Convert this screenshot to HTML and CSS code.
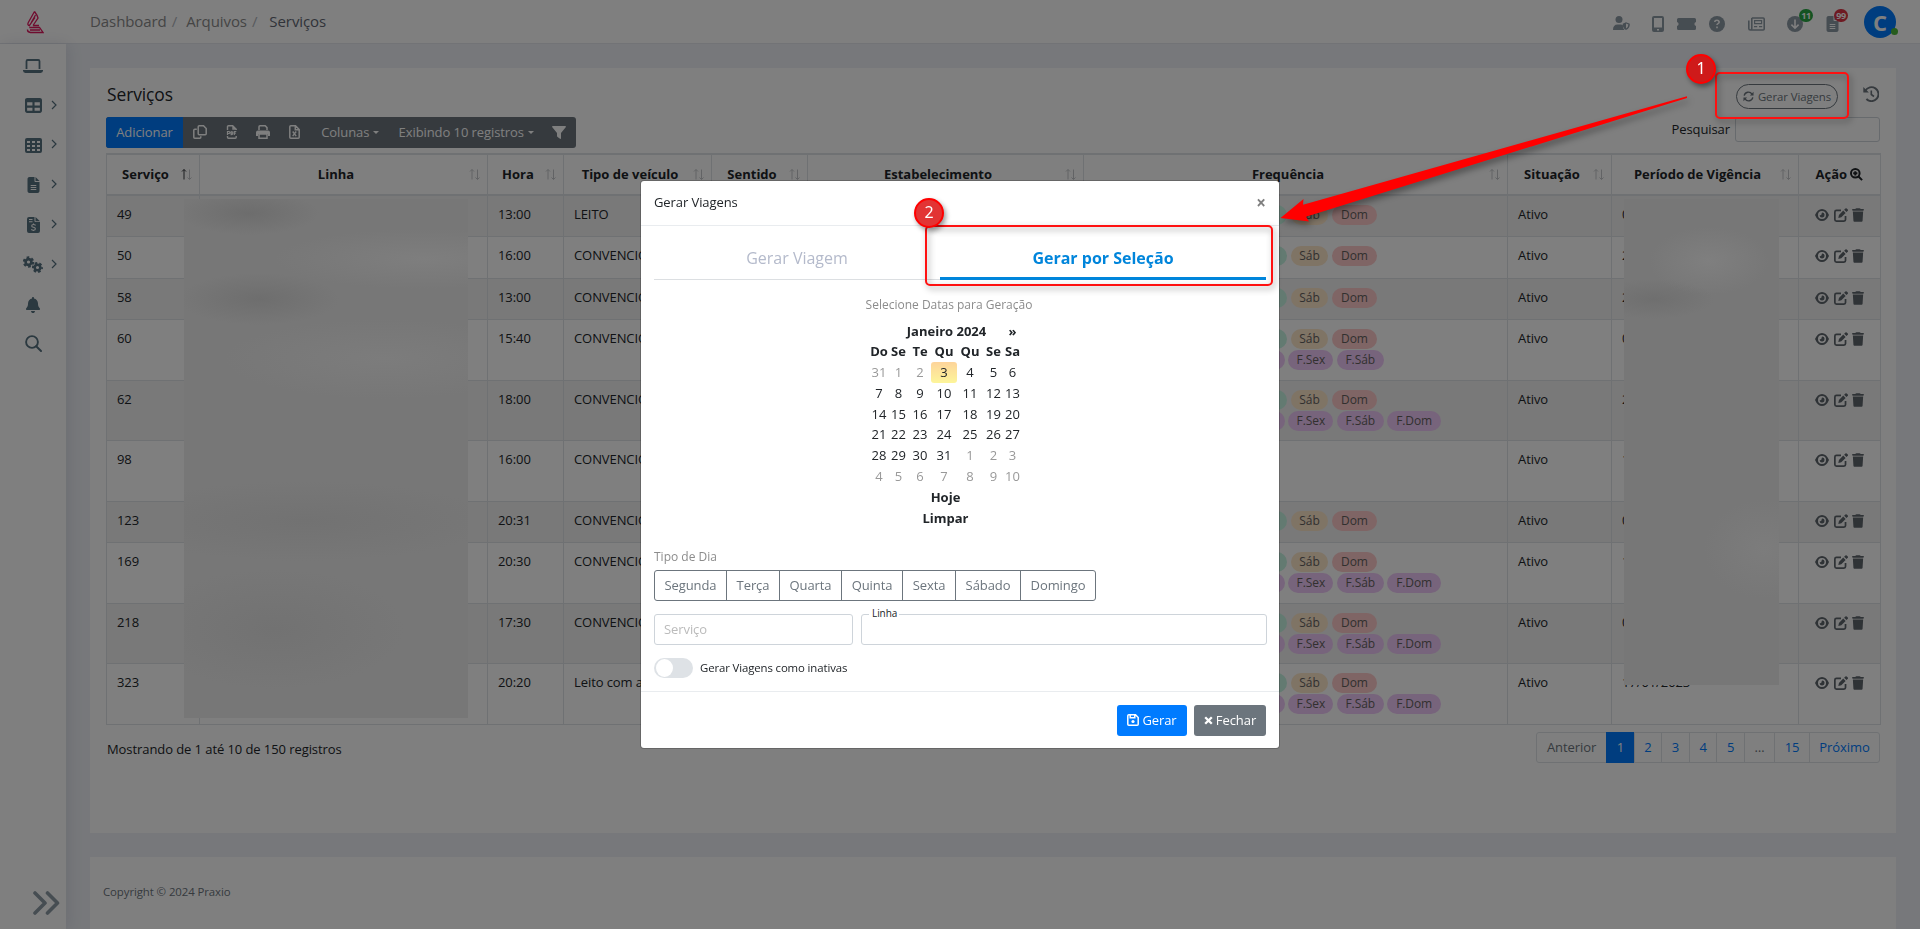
FILE: index.html
```html
<!DOCTYPE html>
<html lang="pt-br">
<head>
    <meta charset="UTF-8">
    <meta name="viewport" content="width=device-width, initial-scale=1.0">
    <title>Serviços</title>
    <link rel="stylesheet" href="styles.css">
</head>
<body>
    <!-- icon sprite -->
    <svg class="sprite" width="0" height="0">
        <symbol id="i-laptop" viewBox="0 0 20 14"><path d="M3.500 10V2.200Q3.500 1 4.700 1h10.600q1.200 0 1.200 1.200V10" fill="none" stroke="currentColor" stroke-width="1.800"/><path d="M0 11h20v.6Q20 14 17.600 14H2.400Q0 14 0 11.600z"/></symbol>
        <symbol id="i-table" viewBox="0 32 512 448"><path d="M64 256V160H224v96H64zm0 64H224v96H64V320zm224 96V320H448v96H288zM448 256H288V160H448v96zM64 32C28.700 32 0 60.700 0 96V416c0 35.300 28.700 64 64 64H448c35.300 0 64-28.700 64-64V96c0-35.300-28.700-64-64-64H64z"/></symbol>
        <symbol id="i-grid" viewBox="0 0 17 15"><path fill-rule="evenodd" d="M2 0h13q2 0 2 2v11q0 2-2 2H2q-2 0-2-2V2q0-2 2-2zM2 3h3v2H2zM7 3h3v2H7zM12 3h3v2h-3zM2 7h3v2H2zM7 7h3v2H7zM12 7h3v2h-3zM2 11h3v2H2zM7 11h3v2H7zM12 11h3v2h-3z"/></symbol>
        <symbol id="i-file" viewBox="0 0 384 512"><path d="M64 0C28.700 0 0 28.700 0 64V448c0 35.300 28.700 64 64 64H320c35.300 0 64-28.700 64-64V160H256c-17.700 0-32-14.300-32-32V0H64zM256 0V128H384L256 0zM112 256H272c8.800 0 16 7.200 16 16s-7.200 16-16 16H112c-8.800 0-16-7.200-16-16s7.200-16 16-16zm0 64H272c8.800 0 16 7.200 16 16s-7.200 16-16 16H112c-8.800 0-16-7.200-16-16s7.200-16 16-16zm0 64H272c8.800 0 16 7.200 16 16s-7.200 16-16 16H112c-8.800 0-16-7.200-16-16s7.200-16 16-16z"/></symbol>
        <symbol id="i-invoice" viewBox="0 0 13 16"><path fill-rule="evenodd" d="M2 0h5.500v4q0 1 1 1H13v9q0 2-2 2H2q-2 0-2-2V2q0-2 2-2zM8.500 0L13 4.200H8.500zM2 2v1h3.500V2zM2 4.200v1h3.500v-1z"/><path d="M8.600 8.300Q7.900 7.500 6.500 7.500 4.700 7.500 4.700 8.900q0 1 1.800 1.400 1.900.4 1.900 1.500 0 1.400-1.900 1.400-1.500 0-2.200-.8M6.500 6.600v1M6.500 13v1.100" fill="none" stroke="#fff" stroke-width="1.100"/></symbol>
        <symbol id="i-cogs" viewBox="0 0 20 17"><g fill="none" stroke="currentColor"><circle cx="5.500" cy="6" r="2.900" stroke-width="2.600"/><circle cx="5.500" cy="6" r="4.600" stroke-width="2.200" stroke-dasharray="2.600 2.217"/><circle cx="14.500" cy="11.500" r="2.800" stroke-width="2.500"/><circle cx="14.500" cy="11.500" r="4.400" stroke-width="2.200" stroke-dasharray="2.500 2.108" stroke-dashoffset="1"/></g></symbol>
        <symbol id="i-bell" viewBox="0 0 448 512"><path d="M224 0c-17.700 0-32 14.300-32 32V51.200C119 66 64 130.600 64 208v18.800c0 47-17.300 92.400-48.500 127.600l-7.400 8.300c-8.400 9.400-10.400 22.900-5.300 34.400S19.400 416 32 416H416c12.600 0 24-7.400 29.200-18.900s3.100-25-5.300-34.400l-7.400-8.300C401.300 319.200 384 273.900 384 226.800V208c0-77.400-55-142-128-156.800V32c0-17.700-14.300-32-32-32zm45.300 493.300c12-12 18.700-28.300 18.700-45.300H224 160c0 17 6.700 33.300 18.700 45.300s28.300 18.700 45.300 18.700s33.300-6.700 45.300-18.700z"/></symbol>
        <symbol id="i-search" viewBox="0 0 17 17"><circle cx="7" cy="7" r="5.900" fill="none" stroke="currentColor" stroke-width="1.900"/><path d="M11.200 11.200L16 16" stroke="currentColor" stroke-width="2" stroke-linecap="round"/></symbol>
        <symbol id="i-right" viewBox="0 0 6 10"><path d="M1 1l4 4-4 4" fill="none" stroke="currentColor" stroke-width="1.200"/></symbol>
        <symbol id="i-double" viewBox="0 0 27 24"><path d="M2 2l10 10L2 22M14.500 2l10 10-10 10" fill="none" stroke="currentColor" stroke-width="3.600" stroke-linecap="round" stroke-linejoin="round"/></symbol>
        <symbol id="i-copy" viewBox="0 0 14 14"><g fill="none" stroke="currentColor" stroke-width="1.500"><path d="M6.200.8h4.300l2.700 2.700v5.200q0 1-1 1h-6q-1 0-1-1V1.800q0-1 1-1z"/><path d="M3.800 4.300h-2q-1 0-1 1v6.900q0 1 1 1h5q1 0 1-1v-1"/></g></symbol>
        <symbol id="i-pdf" viewBox="0 0 12 14"><path d="M1.500 5V1.800q0-1 1-1h4.200l3.500 3.500V5M7 1v3h3M1.500 11v1.200q0 1 1 1h6.700q1 0 1-1V11" fill="none" stroke="currentColor" stroke-width="1.400"/><path d="M1.500 10V6.500H3Q4 6.500 4 7.500T3 8.500H1.500M5.200 6.500v3.200q1.600 0 1.600-1.600T5.200 6.500M8.300 10V6.500h2M8.300 8.200h1.500" fill="none" stroke="currentColor" stroke-width="1.200"/></symbol>
        <symbol id="i-print" viewBox="0 0 14 14"><path d="M3 5V1.800q0-1 1-1h5.200L11 2.600V5" fill="none" stroke="currentColor" stroke-width="1.500"/><path fill-rule="evenodd" d="M2 5.500h10q2 0 2 2V11h-2V9H2v2H0V7.500q0-2 2-2z"/><path d="M3 9h8v4.200H3z" fill="none" stroke="currentColor" stroke-width="1.500"/></symbol>
        <symbol id="i-excel" viewBox="0 0 11 14"><path d="M1.800.8h4.700L10.200 4.500v7.700q0 1-1 1H1.800q-1 0-1-1V1.800q0-1 1-1zM6.300 1v3.700h3.700" fill="none" stroke="currentColor" stroke-width="1.500"/><path d="M3.700 6.500l3.500 4.600M7.200 6.500l-3.500 4.600" stroke="currentColor" stroke-width="1.400"/></symbol>
        <symbol id="i-filter" viewBox="0 0 14 13"><path d="M.8 0h12.400q1.200.3.500 1.300L9 7v5.300q-.2.900-1 .4L5.300 10.700Q5 10.400 5 10V7L.3 1.300Q-.3.300.8 0z"/></symbol>
        <symbol id="i-user" viewBox="0 0 17 14"><circle cx="6" cy="3.500" r="3.500"/><path d="M0 14Q0 8.500 4.500 8.500H8q1 0 1.800.4Q9.500 12 11.500 14z"/><path fill-rule="evenodd" d="M13 6.200l3.800 1.500Q17 12 13 14 9.500 12 9.700 7.700zM13 7.600v4.800q2.400-1.300 2.400-3.800z"/></symbol>
        <symbol id="i-mobile" viewBox="0 0 12 16"><path fill-rule="evenodd" d="M2 0h8q2 0 2 2v12q0 2-2 2H2q-2 0-2-2V2q0-2 2-2zM2 2v9.500h8V2zM5 13v1.500h2V13z"/></symbol>
        <symbol id="i-ticket" viewBox="0 0 19 12"><path d="M1.500 0h16Q19 0 19 1.500V4q-1.600.5-1.600 2T19 8v2.500q0 1.500-1.500 1.500h-16Q0 12 0 10.500V8q1.600-.5 1.600-2T0 4V1.500Q0 0 1.500 0z"/></symbol>
        <symbol id="i-help" viewBox="0 0 16 16"><circle cx="8" cy="8" r="8"/><path d="M5.700 6q.2-1.700 2.200-1.700T10.200 6q0 1-1.200 1.600-1 .5-1 1.400M8 10.600v1.600" fill="none" stroke="#fff" stroke-width="1.600"/></symbol>
        <symbol id="i-news" viewBox="0 0 17 14"><path d="M3.800 1h11.400q1 0 1 1v10q0 1-1 1H2.300Q.8 13 .8 11.500V3.500M3.800 1v10.500Q3.800 13 2.300 13" fill="none" stroke="currentColor" stroke-width="1.600"/><path d="M6.600 3.700h7v3h-7zM6 9.600h3.200M11 9.600h3.200" fill="none" stroke="currentColor" stroke-width="1.200"/></symbol>
        <symbol id="i-down" viewBox="0 0 16 16"><circle cx="8" cy="8" r="8"/><path d="M8 3.500V12M4.400 8.600L8 12.200l3.600-3.600" fill="none" stroke="#fff" stroke-width="1.600"/></symbol>
        <symbol id="i-refresh" viewBox="0 0 12 12"><path d="M1.300 5A4.700 4.700 0 0 1 9.800 3.300M10.700 7A4.700 4.700 0 0 1 2.200 8.700" fill="none" stroke="currentColor" stroke-width="1.500"/><path d="M11.500.8v4h-4zM.5 11.200v-4h4z"/></symbol>
        <symbol id="i-history" viewBox="0 0 16 16"><path d="M2.300 4.800A7 7 0 1 1 3.400 13" fill="none" stroke="currentColor" stroke-width="1.900"/><path d="M.3 1v5.600h5.600z"/><path d="M8.300 4.500v4l2.700 2" fill="none" stroke="currentColor" stroke-width="1.600"/></symbol>
        <symbol id="i-zoom" viewBox="0 0 13 13"><circle cx="5.300" cy="5.300" r="4.300" fill="none" stroke="currentColor" stroke-width="2"/><path d="M8.500 8.500l3.600 3.600M3.200 5.300h4.200M5.300 3.200v4.200" stroke="currentColor" stroke-width="2"/></symbol>
        <symbol id="i-eye" viewBox="0 0 14 12"><path fill-rule="evenodd" d="M7 0q4.500 0 7 6-2.500 6-7 6T0 6Q2.500 0 7 0zM7 2a4 4 0 1 0 0 8 4 4 0 0 0 0-8z"/><path d="M7 3.500A2.500 2.500 0 1 1 4.600 6.200Q6.800 6.300 7 3.500z"/></symbol>
        <symbol id="i-edit" viewBox="0 0 13 13"><path d="M6.500 2.300H2.300q-1.500 0-1.500 1.500v6.900q0 1.500 1.500 1.500h6.900q1.500 0 1.500-1.500V7.500" fill="none" stroke="currentColor" stroke-width="1.600"/><path d="M4 9.200l.6-2.800 4-4 2.200 2.200-4 4zM9.400 1.600l1.200-1.200q.6-.5 1.200 0l1 1q.5.600 0 1.200l-1.200 1.200z"/></symbol>
        <symbol id="i-trash" viewBox="0 0 448 512"><path d="M135.200 17.700L128 32H32C14.300 32 0 46.300 0 64S14.300 96 32 96H416c17.700 0 32-14.300 32-32s-14.300-32-32-32H320l-7.200-14.300C307.400 6.800 296.300 0 284.200 0H163.800c-12.100 0-23.200 6.800-28.600 17.700zM416 128H32L53.200 467c1.600 25.300 22.600 45 47.900 45H346.900c25.300 0 46.300-19.700 47.900-45L416 128z"/></symbol>
        <symbol id="i-save" viewBox="0 0 12 12"><path d="M1.800.8h6.700l2.700 2.700v6.700q0 1-1 1H1.800q-1 0-1-1V1.800q0-1 1-1zM3.200 1v2.800h4.600V1" fill="none" stroke="currentColor" stroke-width="1.500"/><circle cx="6" cy="7.500" r="1.600"/></symbol>
        <symbol id="i-times" viewBox="0 0 9 9"><path d="M1.200 1.200l6.600 6.600M7.800 1.200L1.200 7.800" stroke="currentColor" stroke-width="2.300"/></symbol>
        <symbol id="i-sort" viewBox="0 0 11 12"><path d="M3 11V1M1 3l2-2 2 2" fill="none" stroke="currentColor"/><path class="down" d="M8.500 1v10M6.500 9l2 2 2-2" fill="none"/></symbol>
    </svg>

    <header class="topbar">
        <a class="logo" href="#">
            <svg width="18" height="24" viewBox="0 0 18 24" stroke="#e0195f" stroke-width="1.300"><path d="M8.500 1.500L2.300 12.500q-1.200 2.500 1 3.200L9 7.500M8.500 1.500q3 4 3.500 6.500L7 15.500M9.500 5L5 13M3.300 17.500h10.200l3.500 5H4.500q-3.300-.5-3-3M4 20h10M7 15.500h6"/></svg>
        </a>
        <nav class="breadcrumb">
            <a href="#">Dashboard</a><span class="sep">/</span>
            <a href="#">Arquivos</a><span class="sep">/</span>
            <span class="current">Serviços</span>
        </nav>
        <div class="top-icons">
            <svg class="t-user"><use href="#i-user"/></svg>
            <svg class="t-mobile"><use href="#i-mobile"/></svg>
            <svg class="t-ticket"><use href="#i-ticket"/></svg>
            <svg class="t-help"><use href="#i-help"/></svg>
            <svg class="t-news"><use href="#i-news"/></svg>
            <span class="notif"><svg class="t-down"><use href="#i-down"/></svg><span class="count green">11</span></span>
            <span class="notif"><svg class="t-file"><use href="#i-file"/></svg><span class="count red">99</span></span>
            <span class="avatar">C<span class="online"></span></span>
        </div>
    </header>

    <div class="layout">
        <aside class="sidebar">
            <a class="side-item"><svg width="20" height="14"><use href="#i-laptop"/></svg></a>
            <a class="side-item"><svg width="17" height="15"><use href="#i-table"/></svg><svg class="chev"><use href="#i-right"/></svg></a>
            <a class="side-item"><svg width="17" height="15"><use href="#i-grid"/></svg><svg class="chev"><use href="#i-right"/></svg></a>
            <a class="side-item"><svg width="13" height="16"><use href="#i-file"/></svg><svg class="chev"><use href="#i-right"/></svg></a>
            <a class="side-item"><svg width="13" height="16"><use href="#i-invoice"/></svg><svg class="chev"><use href="#i-right"/></svg></a>
            <a class="side-item"><svg width="20" height="17"><use href="#i-cogs"/></svg><svg class="chev"><use href="#i-right"/></svg></a>
            <a class="side-item"><svg width="14" height="16"><use href="#i-bell"/></svg></a>
            <a class="side-item last"><svg width="17" height="17"><use href="#i-search"/></svg></a>
            <a class="side-toggle"><svg width="27" height="24"><use href="#i-double"/></svg></a>
        </aside>

        <main class="main">
            <section class="card">
                <div class="card-head">
                    <h1>Serviços</h1>
                    <div class="card-actions">
                        <button class="btn-round"><svg width="11" height="11"><use href="#i-refresh"/></svg>Gerar Viagens</button>
                        <svg class="history" width="16" height="16"><use href="#i-history"/></svg>
                    </div>
                </div>
                <div class="tools">
                    <div class="toolbar">
                        <button class="add">Adicionar</button>
                        <button class="ico copy"><svg width="14" height="14"><use href="#i-copy"/></svg></button>
                        <button class="ico"><svg width="12" height="14"><use href="#i-pdf"/></svg></button>
                        <button class="ico"><svg width="14" height="14"><use href="#i-print"/></svg></button>
                        <button class="ico"><svg width="11" height="14"><use href="#i-excel"/></svg></button>
                        <button class="drop cols">Colunas</button>
                        <button class="drop show">Exibindo 10 registros</button>
                        <button class="filter"><svg width="14" height="13"><use href="#i-filter"/></svg></button>
                    </div>
                    <label class="search">Pesquisar <input type="text"></label>
                </div>

                <table class="grid">
                    <colgroup>
                        <col class="c-servico"><col class="c-linha"><col class="c-hora"><col class="c-tipo"><col class="c-sentido">
                        <col class="c-estab"><col class="c-freq"><col class="c-sit"><col class="c-periodo"><col class="c-acao">
                    </colgroup>
                    <thead>
                        <tr>
                            <th class="sorted">Serviço<svg class="sort"><use href="#i-sort"/></svg></th>
                            <th>Linha<svg class="sort"><use href="#i-sort"/></svg></th>
                            <th>Hora<svg class="sort"><use href="#i-sort"/></svg></th>
                            <th>Tipo de veículo<svg class="sort"><use href="#i-sort"/></svg></th>
                            <th>Sentido<svg class="sort"><use href="#i-sort"/></svg></th>
                            <th>Estabelecimento<svg class="sort"><use href="#i-sort"/></svg></th>
                            <th>Frequência<svg class="sort"><use href="#i-sort"/></svg></th>
                            <th>Situação<svg class="sort"><use href="#i-sort"/></svg></th>
                            <th>Período de Vigência<svg class="sort"><use href="#i-sort"/></svg></th>
                            <th class="last">Ação <svg width="13" height="13"><use href="#i-zoom"/></svg></th>
                        </tr>
                    </thead>
                    <tbody id="rows"></tbody>
                </table>

                <div class="table-foot">
                    <span class="info">Mostrando de 1 até 10 de 150 registros</span>
                    <ul class="pagination">
                        <li class="muted w-prev">Anterior</li>
                        <li class="active">1</li>
                        <li>2</li>
                        <li>3</li>
                        <li>4</li>
                        <li>5</li>
                        <li class="muted w-dots">…</li>
                        <li class="w-last">15</li>
                        <li class="w-next">Próximo</li>
                    </ul>
                </div>
            </section>
            <footer class="footer">Copyright © 2024 Praxio</footer>
        </main>
    </div>

    <div class="backdrop">
        <div class="hidden-area linha-area"></div>
        <div class="hidden-area periodo-area"></div>
        <div class="modal">
            <div class="modal-header">
                <span>Gerar Viagens</span>
                <span class="close">×</span>
            </div>
            <div class="modal-body">
                <div class="tabs">
                    <a class="tab">Gerar Viagem</a>
                    <a class="tab active">Gerar por Seleção</a>
                </div>
                <div class="dates">
                    <div class="label">Selecione Datas para Geração</div>
                    <div class="calendar">
                        <b class="month">Janeiro 2024</b><b class="next">»</b>
                        <b>Do</b><b>Se</b><b>Te</b><b>Qu</b><b>Qu</b><b>Se</b><b>Sa</b>
                        <i>31</i><i>1</i><i>2</i><span class="today">3</span><span>4</span><span>5</span><span>6</span>
                        <span>7</span><span>8</span><span>9</span><span>10</span><span>11</span><span>12</span><span>13</span>
                        <span>14</span><span>15</span><span>16</span><span>17</span><span>18</span><span>19</span><span>20</span>
                        <span>21</span><span>22</span><span>23</span><span>24</span><span>25</span><span>26</span><span>27</span>
                        <span>28</span><span>29</span><span>30</span><span>31</span><i>1</i><i>2</i><i>3</i>
                        <i>4</i><i>5</i><i>6</i><i>7</i><i>8</i><i>9</i><i>10</i>
                        <b class="full">Hoje</b>
                        <b class="full">Limpar</b>
                    </div>
                </div>
                <div class="label day-label">Tipo de Dia</div>
                <div class="days">
                    <button class="d1">Segunda</button><button class="d2">Terça</button><button class="d3">Quarta</button><button class="d4">Quinta</button><button class="d5">Sexta</button><button class="d6">Sábado</button><button class="d7">Domingo</button>
                </div>
                <div class="fields">
                    <input class="field servico" type="text" placeholder="Serviço">
                    <div class="field linha"><span>Linha</span></div>
                </div>
                <label class="switch"><span class="track"></span>Gerar Viagens como inativas</label>
            </div>
            <div class="modal-footer">
                <button class="btn primary"><svg width="12" height="12"><use href="#i-save"/></svg>Gerar</button>
                <button class="btn secondary"><svg width="9" height="9"><use href="#i-times"/></svg>Fechar</button>
            </div>
        </div>
    </div>

    <!-- tutorial marks -->
    <div class="marks">
        <div class="box box-1"></div>
        <div class="box box-2"></div>
        <svg class="arrow" width="1920" height="929"><path d="M1687 96.200L1303 204.800L1303.500 199L1280.500 218L1309 221.500L1306 216.800L1687 98z"/></svg>
        <div class="step step-1">1</div>
        <div class="step step-2">2</div>
    </div>

    <script src="script.js"></script>
</body>
</html>
```
FILE: styles.css
```css
* {
    box-sizing: border-box;
}

body {
    margin: 0;
    height: 929px;
    overflow: hidden;
    background-color: #eef1f6;
    color: #212529;
    font-family: "Open Sans", sans-serif;
    font-size: 13px;
    line-height: 1.5;
    letter-spacing: -.08px;
}

button, input {
    font-family: inherit;
    font-size: 13px;
    letter-spacing: inherit;
    margin: 0;
}

svg {
    fill: currentColor;
    display: block;
    flex: none;
}

.sprite {
    position: absolute;
}

/* top bar */
.topbar {
    display: flex;
    align-items: center;
    height: 44px;
    background-color: #fff;
    border-bottom: 1px solid #e4e7ed;
}

.logo {
    width: 66px;
    padding-left: 26px;
}

.logo svg {
    fill: none;
}

.breadcrumb {
    display: flex;
    padding-left: 24px;
    font-size: 15px;
    color: #8a8a8a;
}

.breadcrumb a {
    color: inherit;
    text-decoration: none;
}

.breadcrumb .sep {
    margin: 0 9px 0 5px;
    color: #b0b5bb;
}

.breadcrumb .current {
    margin-left: 3px;
    color: #626773;
}

.top-icons {
    display: flex;
    align-items: center;
    height: 43px;
    margin-left: auto;
    padding-right: 24px;
    color: #8d9aa5;
}

.t-user { width: 17px; height: 14px; margin-right: 22px; margin-top: 3px; }
.t-mobile { width: 12px; height: 16px; margin-right: 13px; margin-top: 4px; }
.t-ticket { width: 19px; height: 12px; margin-right: 13px; margin-top: 4px; }
.t-help { width: 16px; height: 16px; margin-right: 23px; margin-top: 4px; }
.t-news { width: 17px; height: 14px; margin-right: 22px; margin-top: 4px; }
.t-down { width: 16px; height: 16px; }
.t-file { width: 13px; height: 16px; }

.notif {
    position: relative;
    margin-top: 4px;
    margin-right: 23px;
}

.notif + .notif {
    margin-right: 25px;
}

.count {
    position: absolute;
    left: 12px;
    top: -7px;
    min-width: 14px;
    height: 13px;
    border-radius: 7px;
    color: #fff;
    font-size: 9px;
    font-weight: bold;
    letter-spacing: -.4px;
    line-height: 13px;
    text-align: center;
}

.notif + .notif .count {
    left: 8px;
}

.green { background-color: #28a745; }
.red { background-color: #dc3545; }

.avatar {
    position: relative;
    width: 32px;
    height: 32px;
    border-radius: 50%;
    background-color: #007bff;
    color: #fff;
    font-size: 22px;
    font-weight: bold;
    line-height: 32px;
    text-align: center;
}

.online {
    position: absolute;
    right: -2px;
    bottom: 3px;
    width: 7px;
    height: 7px;
    border-radius: 50%;
    background-color: #4fb83a;
}

/* layout */
.layout {
    display: flex;
    height: 885px;
}

.sidebar {
    display: flex;
    flex: none;
    flex-direction: column;
    width: 66px;
    padding-top: 2px;
    background-color: #fff;
    box-shadow: 2px 0 14px rgba(80, 80, 120, .14);
    color: #577280;
}

.side-item {
    display: grid;
    grid-template-columns: 34px 8px;
    align-items: center;
    justify-items: center;
    height: 39.800px;
    padding-left: 16px;
}

.side-item.last {
    height: 37px;
}

.side-item .chev {
    width: 6px;
    height: 10px;
    margin-left: -1px;
    margin-top: -2px;
}

.side-toggle {
    margin-top: auto;
    padding: 0 0 14px 33px;
    color: #8d9aa5;
}

.main {
    display: flex;
    flex-direction: column;
    flex: 1;
    min-width: 0;
    padding: 24px 24px 0;
}

.card {
    height: 765px;
    padding: 16px 16px 0;
    background-color: #fff;
}

.card-head {
    display: flex;
    justify-content: space-between;
    height: 33px;
}

.card-head h1 {
    margin: -3px 0 0 1px;
    font-size: 17.400px;
    font-weight: normal;
}

.card-actions {
    display: flex;
    align-items: flex-start;
}

.btn-round {
    display: flex;
    align-items: center;
    justify-content: center;
    gap: 4px;
    width: 102px;
    height: 25px;
    padding: 0 0 1px;
    border: 1px solid #6c757d;
    border-radius: 13px;
    background: none;
    color: #6c757d;
    font-size: 11.400px;
}

.history {
    margin: 2px 1px 0 25px;
    color: #6c757d;
}

.tools {
    display: flex;
    justify-content: space-between;
    height: 36px;
}

.toolbar {
    display: flex;
    height: 31px;
    border-radius: 3px;
    overflow: hidden;
    background-color: #6c757d;
}

.toolbar button {
    display: flex;
    align-items: center;
    justify-content: center;
    padding: 0 0 1px;
    border: 0;
    background: none;
    color: #fff;
}

.toolbar .add {
    width: 77px;
    background-color: #007bff;
}

.toolbar .ico {
    width: 31.700px;
}

.toolbar .copy {
    margin-left: 1px;
}

.toolbar .cols { width: 79px; }
.toolbar .show { width: 153px; }
.toolbar .filter { width: 33px; }

.drop::after {
    content: "";
    margin-left: 4px;
    border: 3px solid transparent;
    border-top-color: #fff;
    border-bottom: 0;
}

.search {
    display: flex;
    align-items: center;
    height: 25px;
}

.search input {
    width: 145px;
    height: 25px;
    margin-left: 5px;
    border: 1px solid #ced4da;
    border-radius: 3px;
    background: none;
}

/* table */
.grid {
    width: 1774px;
    table-layout: fixed;
    border-collapse: collapse;
}

.c-servico { width: 93px; }
.c-linha { width: 288px; }
.c-hora { width: 76px; }
.c-tipo { width: 148px; }
.c-sentido { width: 96px; }
.c-estab { width: 276px; }
.c-freq { width: 424px; }
.c-sit { width: 104px; }
.c-periodo { width: 187px; }
.c-acao { width: 82px; }

.grid th {
    position: relative;
    height: 41px;
    padding: 0 25px 0 10px;
    border: 1px solid #dee2e6;
    border-top-width: 2px;
    border-bottom-width: 2px;
    color: #212529;
    font-weight: bold;
    letter-spacing: 0;
    text-align: center;
    white-space: nowrap;
}

.grid th.last {
    padding: 0;
}

.grid th.last svg {
    display: inline-block;
    vertical-align: -2px;
}

.grid .sort {
    position: absolute;
    right: 7px;
    top: 13px;
    width: 11px;
    height: 13px;
    color: #c4c7ca;
}

.grid .sorted .sort {
    color: #34383c;
}

.down {
    stroke: #c4c7ca;
}

.grid td {
    padding: 9px 10px 0;
    border: 1px solid #dee2e6;
    vertical-align: top;
    white-space: nowrap;
    overflow: hidden;
}

.grid tbody tr:nth-child(odd) {
    background-color: #f2f2f2;
}

/* first pill column starts under the dialog */
.pills {
    display: flex;
    gap: 4px;
    height: 21px;
    padding-left: 157px;
}

.pills.feriados {
    gap: 3.400px;
    padding-left: 146px;
}

.pill {
    width: 36px;
    height: 20px;
    border-radius: 10px;
    font-size: 12px;
    line-height: 20px;
    text-align: center;
    color: #65615f;
}

.pill.week { background-color: #c6f5e3; }
.pill.sab { width: 37px; background-color: #ffe8cb; }
.pill.dom { width: 45px; background-color: #ffcaca; }
.pill.fer { width: 45px; background-color: #efc9f8; }
.pill.fsab { width: 47px; }
.pill.fdom { width: 54px; }

.actions {
    display: flex;
    align-items: center;
    gap: 4.500px;
    padding: 3px 0 0 6px;
    color: #5f666d;
}

.table-foot {
    display: flex;
    justify-content: space-between;
    padding-top: 7px;
}

.info {
    padding: 8px 0 0 1px;
}

.pagination {
    display: flex;
    margin: 0;
    padding: 0;
    list-style: none;
}

.pagination li {
    width: 28.600px;
    height: 31px;
    margin-left: -1px;
    border: 1px solid #dee2e6;
    color: #007bff;
    line-height: 28px;
    text-align: center;
}

.pagination .w-prev { width: 71px; border-radius: 3px 0 0 3px; }
.pagination .w-dots { width: 31px; }
.pagination .w-last { width: 36px; }
.pagination .w-next { width: 71px; border-radius: 0 3px 3px 0; }
.pagination .muted { color: #6c757d; }

.pagination .active {
    background-color: #007bff;
    border-color: #007bff;
    color: #fff;
}

.footer {
    flex: 1;
    margin-top: 24px;
    padding: 26px 13px;
    background-color: #fff;
    color: #6c757d;
    font-size: 11.400px;
}

/* modal */
.backdrop {
    position: fixed;
    inset: 0;
    display: flex;
    align-items: flex-start;
    justify-content: center;
    padding-top: 181px;
    background-color: rgba(0, 0, 0, .5);
}

.hidden-area {
    position: absolute;
    background-color: #777;
}

.linha-area {
    left: 184px;
    top: 199px;
    width: 284px;
    height: 519px;
    background-image:
        radial-gradient(ellipse 70px 22px at 65px 14px, #6d6d6d, transparent),
        radial-gradient(ellipse 80px 26px at 75px 100px, #6e6e6e, transparent),
        radial-gradient(ellipse 150px 30px at 240px 60px, #7e7e7e, transparent),
        radial-gradient(ellipse 160px 40px at 200px 160px, #7c7c7c, transparent),
        radial-gradient(ellipse 190px 40px at 120px 322px, #727272, transparent),
        radial-gradient(ellipse 130px 60px at 90px 430px, #727272, transparent);
}

.periodo-area {
    left: 1624px;
    top: 199px;
    width: 155px;
    height: 486px;
    background-image:
        radial-gradient(ellipse 60px 34px at 85px 62px, #7f7f7f, transparent),
        radial-gradient(ellipse 60px 20px at 30px 100px, #6f6f6f, transparent),
        radial-gradient(ellipse 60px 50px at 140px 350px, #7c7c7c, transparent);
}

.modal {
    position: relative;
    width: 638px;
    height: 567px;
    background-color: #fff;
    border-radius: 3px;
    box-shadow: 0 0 0 1px rgba(0, 0, 0, .2);
}

.modal-header {
    display: flex;
    justify-content: space-between;
    height: 45px;
    padding: 12px 13px 0;
    border-bottom: 1px solid #e9ecef;
}

.close {
    color: #7f7f7f;
    font-size: 17px;
    font-weight: bold;
    line-height: 20px;
}

.modal-body {
    height: 465px;
    padding: 0 12px 0 13px;
}

.tabs {
    display: flex;
    width: 612px;
    height: 54px;
    border-bottom: 1px solid #dcdfe2;
    letter-spacing: 0;
}

.tab {
    width: 286px;
    height: 54px;
    padding-top: 20px;
    color: #b4bacb;
    font-size: 16px;
    text-align: center;
}

.tab.active {
    width: 326px;
    border-bottom: 3px solid #0085db;
    color: #0085db;
    font-weight: bold;
}

.dates {
    display: flex;
    flex-direction: column;
    align-items: center;
    padding: 16px 0 0 0;
}

.label {
    color: #8c8c8c;
    font-size: 12px;
    letter-spacing: 0;
    line-height: 18px;
}

.dates .label {
    margin-right: 23px;
}

.calendar {
    display: grid;
    grid-template-columns: 18px 21px 22px 26px 26px 21px 17px;
    grid-template-rows: 20px;
    grid-auto-rows: 20.850px;
    margin: 7px 30px 0 0;
    letter-spacing: 0;
    line-height: 21px;
    text-align: center;
    white-space: nowrap;
}

.calendar i {
    color: #999;
    font-style: normal;
}

.calendar b {
    justify-self: center;
}

.calendar .month { grid-column: 2 / 7; padding-left: 1px; }
.calendar .next { grid-column: 7; }
.calendar .full { grid-column: 1 / 8; }

.today {
    border-radius: 3px;
    background-image: linear-gradient(#fdd49a, #fdf59a);
}

.day-label {
    margin-top: 19px;
}

.days {
    display: flex;
    margin-top: 4px;
}

.days button {
    height: 31px;
    margin-right: -1px;
    padding: 0 0 1px;
    border: 1px solid #6c757d;
    background: none;
    color: #6c757d;
}

.days .d1 { width: 73px; border-radius: 3px 0 0 3px; }
.days .d2 { width: 54px; }
.days .d3 { width: 63px; }
.days .d4 { width: 62px; }
.days .d5 { width: 54px; }
.days .d6 { width: 66px; }
.days .d7 { width: 76px; border-radius: 0 3px 3px 0; }

.fields {
    display: flex;
    gap: 8px;
    margin-top: 13px;
}

.field {
    height: 31px;
    padding: 0 9px 1px;
    border: 1px solid #ced4da;
    border-radius: 3px;
}

.field.servico {
    width: 199px;
}

.field::placeholder {
    color: #bbb;
}

.field.linha {
    position: relative;
    flex: 1;
}

.field.linha span {
    position: absolute;
    left: 7px;
    top: -9px;
    padding: 0 2px 0 3px;
    background-color: #fff;
    font-size: 10px;
    line-height: 14px;
}

.switch {
    display: flex;
    align-items: center;
    gap: 7px;
    margin-top: 13px;
    font-size: 11.400px;
    letter-spacing: -.12px;
    line-height: 20px;
}

.track {
    width: 39px;
    height: 20px;
    padding: 1px 2px;
    border-radius: 10px;
    background-color: #dee2e6;
}

.track::before {
    content: "";
    display: block;
    width: 17px;
    height: 18px;
    border-radius: 50%;
    background-color: #fff;
}

.modal-footer {
    display: flex;
    justify-content: flex-end;
    gap: 7px;
    padding: 13px 13px 0;
    border-top: 1px solid #e9ecef;
}

.btn {
    display: flex;
    align-items: center;
    justify-content: center;
    gap: 3px;
    height: 31px;
    padding: 0 0 1px;
    border: 0;
    border-radius: 3px;
    color: #fff;
}

.btn.primary { width: 70px; background-color: #007bff; }
.btn.secondary { width: 72px; background-color: #6c757d; }

/* tutorial marks */
.marks {
    position: fixed;
    inset: 0;
    pointer-events: none;
}

.arrow {
    position: absolute;
    inset: 0;
    fill: #f00;
    filter: drop-shadow(2px 4px 3px rgba(0, 0, 0, .35));
}

.box {
    position: absolute;
    border: 2px solid #f11;
    border-radius: 5px;
    filter: drop-shadow(2px 3px 3px rgba(0, 0, 0, .4));
}

.box-1 { left: 1715px; top: 72px; width: 134px; height: 47px; }
.box-2 { left: 925px; top: 225px; width: 348px; height: 61px; }

.step {
    position: absolute;
    width: 30px;
    height: 30px;
    border: 2px solid #f00;
    border-radius: 50%;
    background-color: #cf1a1a;
    color: #fff;
    font-family: "Noto Sans", sans-serif;
    font-size: 16px;
    line-height: 25px;
    text-align: center;
    box-shadow: 2px 3px 5px rgba(0, 0, 0, .4);
}

.step-1 { left: 1686px; top: 54px; }
.step-2 { left: 914px; top: 198px; background-color: #e23434; }
```
FILE: script.js
```js
// serviço, hora, tipo, feriados, vigência, altura
const servicos = [
    ['49', '13:00', 'LEITO', [], '0', 41],
    ['50', '16:00', 'CONVENCIONAL', [], '2', 42],
    ['58', '13:00', 'CONVENCIONAL', [], '2', 41],
    ['60', '15:40', 'CONVENCIONAL', ['Sex', 'Sáb'], '0', 61],
    ['62', '18:00', 'CONVENCIONAL', ['Sex', 'Sáb', 'Dom'], '2', 60],
    ['98', '16:00', 'CONVENCIONAL', null, '1', 61],
    ['123', '20:31', 'CONVENCIONAL', [], '0', 41],
    ['169', '20:30', 'CONVENCIONAL', ['Sex', 'Sáb', 'Dom'], '1', 61],
    ['218', '17:30', 'CONVENCIONAL', ['Sex', 'Sáb', 'Dom'], '0', 60],
    ['323', '20:20', 'Leito com ar', ['Sex', 'Sáb', 'Dom'], '17/01/2023', 61]
];

const classes = { 'Sáb': 'fsab', 'Dom': 'fdom' };

function frequencia(feriados) {
    if (!feriados) return '';
    let html = '<div class="pills"><span class="pill week"></span><span class="pill sab">Sáb</span><span class="pill dom">Dom</span></div>';
    if (feriados.length) {
        html += '<div class="pills feriados"><span class="pill fer"></span>'
            + feriados.map(d => `<span class="pill fer ${classes[d] || ''}">F.${d}</span>`).join('')
            + '</div>';
    }
    return html;
}

document.getElementById('rows').innerHTML = servicos.map(s => `
    <tr style="height: ${s[5]}px">
        <td>${s[0]}</td><td></td><td>${s[1]}</td><td>${s[2]}</td><td></td><td></td>
        <td>${frequencia(s[3])}</td>
        <td>Ativo</td><td>${s[4]}</td>
        <td><div class="actions">
            <svg width="14" height="12"><use href="#i-eye"/></svg>
            <svg width="14" height="14"><use href="#i-edit"/></svg>
            <svg width="12" height="14"><use href="#i-trash"/></svg>
        </div></td>
    </tr>`).join('');
```
